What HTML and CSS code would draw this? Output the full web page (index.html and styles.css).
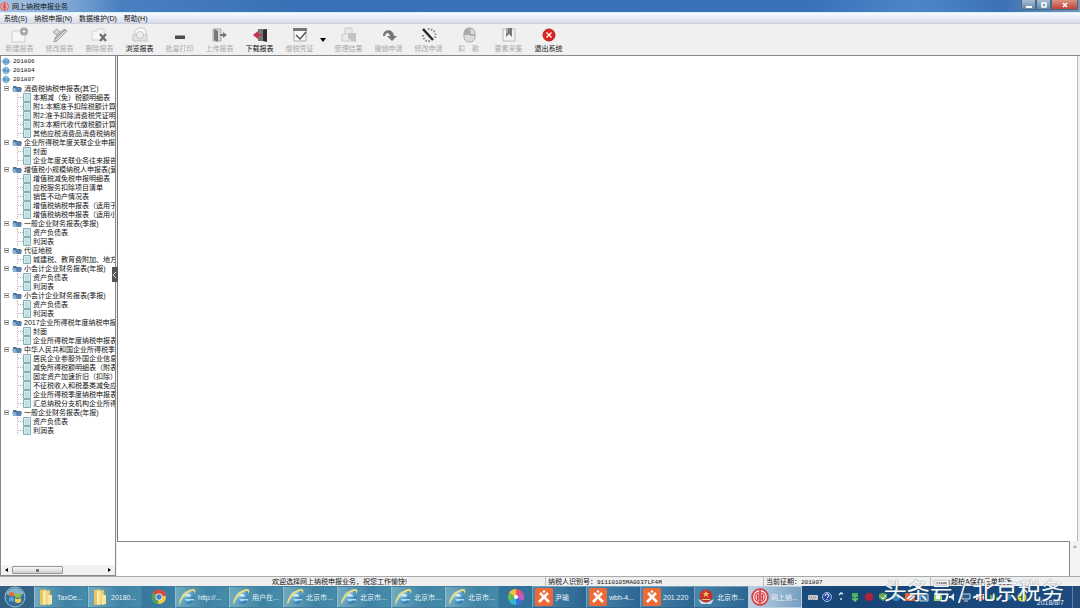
FILE: index.html
```html
<!doctype html>
<html lang="zh-CN">

<head>
    <meta charset="UTF-8">
    <title>网上纳税申报业务</title>
    <link rel="stylesheet" href="styles.css">
</head>

<body>
    <!-- Shared icons -->
    <svg class="sprite" aria-hidden="true">
        <defs>
            <linearGradient id="blue-ball" x1="0" y1="0" x2="1" y2="1">
                <stop offset="0" stop-color="#a5e4fa" />
                <stop offset="1" stop-color="#0f62a5" />
            </linearGradient>
            <linearGradient id="paper-yellow" x1="0" y1="0" x2="1" y2="0">
                <stop offset="0" stop-color="#fdf3b4" />
                <stop offset="1" stop-color="#e2bb55" />
            </linearGradient>
        </defs>
        <symbol id="globe" viewBox="0 0 10 9">
            <path d="M5 0l5 4.500-5 4.500-5-4.500z" fill="#bcdcec" />
            <circle cx="5" cy="4.500" r="3.500" fill="#86b8d8" />
            <path d="M2 3h3v3H3zM6 4l2-1v3H6z" fill="#5b94bd" />
        </symbol>
        <symbol id="folder" viewBox="0 0 10 8">
            <path d="M1 7V1h3l1 1h4v5z" fill="#4d7397" />
            <path d="M0 3h7l2 4H1z" fill="#8fb2d4" />
            <path d="M3 3h7L9 7H5z" fill="#5a83ae" />
        </symbol>
        <symbol id="sheet" viewBox="0 0 8 9">
            <path d="M.5.500h7v8h-7z" fill="#d3ecee" stroke="#86aeb6" />
            <path d="M2 3h4M2 5h4M2 7h4" stroke="#9cc9d0" stroke-width=".7" />
        </symbol>
        <symbol id="seal" viewBox="0 0 16 16">
            <circle cx="8" cy="8" r="7" fill="#fbe4e4" stroke="#d23b43" stroke-width="1.500" />
            <circle cx="8" cy="8" r="4.500" fill="none" stroke="#d23b43" />
            <path d="M8 2v12M6 5v6M10 5v6" stroke="#d23b43" stroke-width="1.500" />
        </symbol>
        <symbol id="explorer" viewBox="0 0 18 18">
            <circle cx="10" cy="9.500" r="6.500" fill="url(#blue-ball)" />
            <path d="M7 8.500a3 2.500 0 0 1 6 0z" fill="#d9eef5" />
            <path d="M7 11h9v1.500h-4q-3 2-5-1.500z" fill="#b6dceb" />
            <path d="M2 17C-1 13 6 2 15 1c3 0 3 3 1 5 1-3-1-4-4-2C7 6 3 12 2 17z" fill="#e9dc85" />
        </symbol>
        <symbol id="files" viewBox="0 0 16 18">
            <path d="M2 2l6-1v15l-6 1z" fill="#e7c465" />
            <path d="M5 3l7-1 1 14-8 1z" fill="url(#paper-yellow)" />
            <path d="M10 7h4v9l-4 1z" fill="#f7e7a3" />
        </symbol>
        <symbol id="remote" viewBox="0 0 18 18">
            <rect width="18" height="18" rx="2" fill="#ee6a35" />
            <path d="M4 14l9-9M5 5l3 3M10 10l4 4" stroke="#fff" stroke-width="2.500" />
            <circle cx="9" cy="3.500" r="1.200" fill="#fff" />
        </symbol>
    </svg>

    <header class="titlebar">
        <svg class="title-icon"><use href="#seal" /></svg>
        <h1 class="title">网上纳税申报业务</h1>
        <div class="window-controls">
            <button class="window-button" aria-label="最小化"><svg viewBox="0 0 10 8"><path d="M2 6h6" stroke="#fff" stroke-width="2" /></svg></button>
            <button class="window-button" aria-label="还原"><svg viewBox="0 0 10 8"><path d="M3 2h4v4H3z" fill="none" stroke="#fff" stroke-width="1.500" /></svg></button>
            <button class="window-button close" aria-label="关闭"><svg viewBox="0 0 10 8"><path d="M3 2l4 4M7 2L3 6" stroke="#fff" stroke-width="1.500" /></svg></button>
        </div>
    </header>

    <nav class="menubar">
        <button class="menu-item">系统(S)</button>
        <button class="menu-item">纳税申报(N)</button>
        <button class="menu-item">数据维护(D)</button>
        <button class="menu-item">帮助(H)</button>
    </nav>

    <div class="toolbar">
        <button class="tool" disabled>
            <svg viewBox="0 0 18 16"><path d="M1 4h13v11H1z" fill="#f6f6f6" stroke="#ccc" /><circle cx="13" cy="4.500" r="4" fill="#a5a5a5" /><path d="M11 4.500h4M13 2.500v4" stroke="#e8e8e8" /></svg>
            新建报表
        </button>
        <button class="tool" disabled>
            <svg viewBox="0 0 18 16"><path d="M2 5l4-3 3 3-3 3zM9 5l5-3 2 2-10 10-3 1 1-4z" fill="#d5d5d5" stroke="#a2a2a2" /><path d="M4 12L14 3" stroke="#888" /></svg>
            修改报表
        </button>
        <button class="tool" disabled>
            <svg viewBox="0 0 18 16"><path d="M1 4h5l1-2h6v11H1z" fill="#f7f7f7" stroke="#d2d2d2" /><path d="M9 7l6 7M15 7l-6 7" stroke="#6f6f6f" stroke-width="2.200" /></svg>
            删除报表
        </button>
        <button class="tool">
            <svg viewBox="0 0 18 16"><path d="M4 9V4l3-3h6l2 3v5" fill="#f8f8f8" stroke="#ccc" /><path d="M2 8h14v6H2z" fill="#e2e2e2" stroke="#c4c4c4" /><circle cx="9" cy="8" r="3.500" fill="#eee" stroke="#c3c3c3" /></svg>
            浏览报表
        </button>
        <button class="tool" disabled>
            <svg viewBox="0 0 18 16"><path d="M4 8h10v4H4z" fill="#4c4c4c" /><path d="M4 8h10v1H4z" fill="#999" /></svg>
            批量打印
        </button>
        <button class="tool" disabled>
            <svg viewBox="0 0 18 16"><path d="M2 2h8v12H2z" fill="#d8d8d8" stroke="#aaa" /><path d="M3 2l4 2v11l-4-2z" fill="#777" /><path d="M9 7h3V5l4 3-4 3V9H9z" fill="#777" /></svg>
            上传报表
        </button>
        <button class="tool">
            <svg viewBox="0 0 18 16"><path d="M7 2h9v12H7z" fill="#777" /><path d="M12 3l4-1v13l-4-1z" fill="#332b2b" /><path d="M11 7H7V4L2 8l5 4V9h4z" fill="#c83246" /></svg>
            下载报表
        </button>
        <button class="tool" disabled>
            <svg viewBox="0 0 18 16"><path d="M3 2h12v12H3z" fill="#f8f8f8" stroke="#aaa" /><path d="M2 1h14v3H2z" fill="#777" /><path d="M5 8l4 4 6-7" fill="none" stroke="#555" stroke-width="1.500" /></svg>
            缴税凭证
        </button>
        <button class="tool-arrow" aria-label="更多"><svg viewBox="0 0 6 4"><path d="M0 0h6L3 4z" /></svg></button>
        <button class="tool" disabled>
            <svg viewBox="0 0 18 16"><path d="M5 7V1h7v6M2 7h13v7H2z" fill="#e9e9e9" stroke="#ccc" /><path d="M8 6h8v9l-4-1-4-3z" fill="#c3c3c3" /></svg>
            受理结果
        </button>
        <button class="tool" disabled>
            <svg viewBox="0 0 18 16"><path d="M3 9c0-7 10-8 11 0h3l-5 5-5-5h3c-1-4-4-4-5 0z" fill="#777" /></svg>
            撤销申请
        </button>
        <button class="tool" disabled>
            <svg viewBox="0 0 18 16"><path d="M3 2l10 11" stroke="#292929" stroke-width="2.500" /><path d="M8 2c6 0 9 5 7 9M3 8c0 4 3 7 7 6" fill="none" stroke="#888" stroke-width="2" stroke-dasharray="1.500 1.500" /></svg>
            修改申请
        </button>
        <button class="tool" disabled>
            <svg viewBox="0 0 18 16"><rect x="4" y="1" width="11" height="14" rx="5" fill="#ddd" stroke="#aaa" /><path d="M9 1v7H4c0-4 1-7 5-7z" fill="#aaa" /><path d="M10 1v7h5" fill="none" stroke="#888" /></svg>
            扣&#12288;款
        </button>
        <button class="tool" disabled>
            <svg viewBox="0 0 18 16"><path d="M3 2h12v12H3z" fill="#f3f3f3" stroke="#bbb" /><path d="M6 1h6v9l-3-3-3 3z" fill="#777" /><path d="M6 1h2v5H6z" fill="#aaa" /></svg>
            要素采集
        </button>
        <button class="tool">
            <svg viewBox="0 0 18 16"><circle cx="9" cy="8" r="6" fill="#dc2424" stroke="#b61e1e" /><path d="M6.500 5.500l5 5M11.500 5.500l-5 5" stroke="#fff" stroke-width="1.200" /></svg>
            退出系统
        </button>
    </div>

    <main class="workspace">
        <aside class="sidebar">
            <div class="tree-view">
                <ul class="periods">
                    <li class="row"><svg class="globe"><use href="#globe" /></svg><span class="code">201806</span></li>
                    <li class="row"><svg class="globe"><use href="#globe" /></svg><span class="code">201804</span></li>
                    <li class="row"><svg class="globe"><use href="#globe" /></svg><span class="code">201807</span></li>
                </ul>
                <ul class="tree">
                    <li class="branch">
                        <div class="row"><span class="toggle"></span><svg class="folder"><use href="#folder" /></svg>消费税纳税申报表(其它)</div>
                        <ul class="leaves">
                            <li class="row leaf"><svg class="sheet"><use href="#sheet" /></svg>本期减（免）税额明细表</li>
                            <li class="row leaf"><svg class="sheet"><use href="#sheet" /></svg>附1:本期准予扣除税额计算</li>
                            <li class="row leaf"><svg class="sheet"><use href="#sheet" /></svg>附2:准予扣除消费税凭证明</li>
                            <li class="row leaf"><svg class="sheet"><use href="#sheet" /></svg>附3:本期代收代缴税额计算</li>
                            <li class="row leaf"><svg class="sheet"><use href="#sheet" /></svg>其他应税消费品消费税纳税</li>
                        </ul>
                    </li>
                    <li class="branch">
                        <div class="row"><span class="toggle"></span><svg class="folder"><use href="#folder" /></svg>企业所得税年度关联企业申报表</div>
                        <ul class="leaves">
                            <li class="row leaf"><svg class="sheet"><use href="#sheet" /></svg>封面</li>
                            <li class="row leaf"><svg class="sheet"><use href="#sheet" /></svg>企业年度关联业务往来报告</li>
                        </ul>
                    </li>
                    <li class="branch">
                        <div class="row"><span class="toggle"></span><svg class="folder"><use href="#folder" /></svg>增值税小规模纳税人申报表(营</div>
                        <ul class="leaves">
                            <li class="row leaf"><svg class="sheet"><use href="#sheet" /></svg>增值税减免税申报明细表</li>
                            <li class="row leaf"><svg class="sheet"><use href="#sheet" /></svg>应税服务扣除项目清单</li>
                            <li class="row leaf"><svg class="sheet"><use href="#sheet" /></svg>销售不动产情况表</li>
                            <li class="row leaf"><svg class="sheet"><use href="#sheet" /></svg>增值税纳税申报表（适用于</li>
                            <li class="row leaf"><svg class="sheet"><use href="#sheet" /></svg>增值税纳税申报表（适用小</li>
                        </ul>
                    </li>
                    <li class="branch">
                        <div class="row"><span class="toggle"></span><svg class="folder"><use href="#folder" /></svg>一般企业财务报表(季报)</div>
                        <ul class="leaves">
                            <li class="row leaf"><svg class="sheet"><use href="#sheet" /></svg>资产负债表</li>
                            <li class="row leaf"><svg class="sheet"><use href="#sheet" /></svg>利润表</li>
                        </ul>
                    </li>
                    <li class="branch">
                        <div class="row"><span class="toggle"></span><svg class="folder"><use href="#folder" /></svg>代征地税</div>
                        <ul class="leaves">
                            <li class="row leaf"><svg class="sheet"><use href="#sheet" /></svg>城建税、教育费附加、地方</li>
                        </ul>
                    </li>
                    <li class="branch">
                        <div class="row"><span class="toggle"></span><svg class="folder"><use href="#folder" /></svg>小会计企业财务报表(年报)</div>
                        <ul class="leaves">
                            <li class="row leaf"><svg class="sheet"><use href="#sheet" /></svg>资产负债表</li>
                            <li class="row leaf"><svg class="sheet"><use href="#sheet" /></svg>利润表</li>
                        </ul>
                    </li>
                    <li class="branch">
                        <div class="row"><span class="toggle"></span><svg class="folder"><use href="#folder" /></svg>小会计企业财务报表(季报)</div>
                        <ul class="leaves">
                            <li class="row leaf"><svg class="sheet"><use href="#sheet" /></svg>资产负债表</li>
                            <li class="row leaf"><svg class="sheet"><use href="#sheet" /></svg>利润表</li>
                        </ul>
                    </li>
                    <li class="branch">
                        <div class="row"><span class="toggle"></span><svg class="folder"><use href="#folder" /></svg>2017企业所得税年度纳税申报表</div>
                        <ul class="leaves">
                            <li class="row leaf"><svg class="sheet"><use href="#sheet" /></svg>封面</li>
                            <li class="row leaf"><svg class="sheet"><use href="#sheet" /></svg>企业所得税年度纳税申报表</li>
                        </ul>
                    </li>
                    <li class="branch">
                        <div class="row"><span class="toggle"></span><svg class="folder"><use href="#folder" /></svg>中华人民共和国企业所得税季度</div>
                        <ul class="leaves">
                            <li class="row leaf"><svg class="sheet"><use href="#sheet" /></svg>居民企业参股外国企业信息</li>
                            <li class="row leaf"><svg class="sheet"><use href="#sheet" /></svg>减免所得税额明细表（附表</li>
                            <li class="row leaf"><svg class="sheet"><use href="#sheet" /></svg>固定资产加速折旧（扣除）</li>
                            <li class="row leaf"><svg class="sheet"><use href="#sheet" /></svg>不征税收入和税基类减免应</li>
                            <li class="row leaf"><svg class="sheet"><use href="#sheet" /></svg>企业所得税季度纳税申报表</li>
                            <li class="row leaf"><svg class="sheet"><use href="#sheet" /></svg>汇总纳税分支机构企业所得</li>
                        </ul>
                    </li>
                    <li class="branch">
                        <div class="row"><span class="toggle"></span><svg class="folder"><use href="#folder" /></svg>一般企业财务报表(年报)</div>
                        <ul class="leaves">
                            <li class="row leaf"><svg class="sheet"><use href="#sheet" /></svg>资产负债表</li>
                            <li class="row leaf"><svg class="sheet"><use href="#sheet" /></svg>利润表</li>
                        </ul>
                    </li>
                </ul>
            </div>
            <div class="scrollbar">
                <svg class="scroll-arrow" viewBox="0 0 3 4"><path d="M3 0v4L0 2z" /></svg>
                <div class="scroll-track"><div class="scroll-thumb"></div></div>
                <svg class="scroll-arrow" viewBox="0 0 3 4"><path d="M0 0v4l3-2z" /></svg>
            </div>
            <button class="splitter" aria-label="收起"><svg viewBox="0 0 5 8"><path d="M4 1L1 4l3 3" fill="none" stroke="#ddd" /></svg></button>
        </aside>
        <section class="content">
            <div class="document"></div>
            <div class="message-pane">
                <div class="messages"></div>
                <div class="message-scroll"><svg class="scroll-up" viewBox="0 0 4 3"><path d="M0 3h4L2 0z" fill="#aaa" /></svg></div>
            </div>
        </section>
    </main>

    <footer class="statusbar">
        <p class="status welcome">欢迎选择网上纳税申报业务，祝您工作愉快!</p>
        <p class="status taxpayer">纳税人识别号：<span class="code">91110105MA0037LF4M</span></p>
        <p class="status period">当前征期：<span class="code">201807</span></p>
        <p class="status version"><span class="code">|num|</span>超柏A保存云单机版</p>
    </footer>

    <div class="taskbar">
        <button class="start" aria-label="开始">
            <svg viewBox="0 0 22 22"><circle cx="11" cy="11" r="10" fill="#356e9b" stroke="#93bed1" /><path d="M2 8a10 10 0 0 1 18 0Q11 12 2 8z" fill="#86b3c9" /><path d="M5 7q3-2 5 0v4q-3-2-5 0z" fill="#e46a3c" /><path d="M11 7q3 2 6 0v4q-3 2-6 0z" fill="#91bd43" /><path d="M5 12q3-2 5 0v4q-3-2-5 0z" fill="#4fa7dc" /><path d="M11 12q3 2 6 0v4q-3 2-6 0z" fill="#f2cb46" /></svg>
        </button>
        <button class="task"><svg><use href="#files" /></svg><span>TaxDe...</span></button>
        <button class="task"><svg><use href="#files" /></svg><span>20180...</span></button>
        <button class="task pinned" aria-label="Chrome">
            <svg viewBox="0 0 18 18"><circle cx="9" cy="9" r="7" fill="#f1c83c" /><path d="M9 9L3 5a7 7 0 0 1 13 3H9z" fill="#d94b3d" /><path d="M9 9l-1 7A7 7 0 0 1 3 5z" fill="#4da25b" /><circle cx="9" cy="9" r="3.500" fill="#fff" /><circle cx="9" cy="9" r="2.700" fill="#4380c4" /></svg>
        </button>
        <button class="task"><svg><use href="#explorer" /></svg><span>http://...</span></button>
        <button class="task"><svg><use href="#explorer" /></svg><span>用户在...</span></button>
        <button class="task"><svg><use href="#explorer" /></svg><span>北京市...</span></button>
        <button class="task"><svg><use href="#explorer" /></svg><span>北京市...</span></button>
        <button class="task"><svg><use href="#explorer" /></svg><span>北京市...</span></button>
        <button class="task"><svg><use href="#explorer" /></svg><span>北京市...</span></button>
        <button class="task pinned" aria-label="浏览器">
            <svg viewBox="0 0 18 18"><path d="M9 9V1a8 8 0 0 1 7 4z" fill="#e7506c" /><path d="M9 9l7-4a8 8 0 0 1 0 8z" fill="#c459c5" /><path d="M9 9l7 4a8 8 0 0 1-7 4z" fill="#3f72d8" /><path d="M9 9v8a8 8 0 0 1-7-4z" fill="#37b8d0" /><path d="M9 9l-7 4a8 8 0 0 1 0-8z" fill="#61bd4f" /><path d="M9 9L2 5a8 8 0 0 1 7-4z" fill="#f0c23e" /><circle cx="9" cy="9" r="2" fill="#fff" /></svg>
        </button>
        <button class="task dark"><svg><use href="#remote" /></svg><span>尹瑜</span></button>
        <button class="task dark"><svg><use href="#remote" /></svg><span>wbh-4...</span></button>
        <button class="task dark"><svg><use href="#remote" /></svg><span>201.220</span></button>
        <button class="task dark">
            <svg viewBox="0 0 18 18"><path d="M1 11q8 5 16 0l-3 5H4z" fill="#c7dbea" /><circle cx="9" cy="8" r="6.500" fill="#c7332b" /><path d="M9 3l1 2h2l-1.500 1.500L11 9 9 7.500 7 9l.5-2.500L6 5h2zM5 11h8v1H5z" fill="#f1c765" /></svg>
            <span>北京市...</span>
        </button>
        <button class="task active"><svg><use href="#seal" /></svg><span>网上纳...</span></button>
        <div class="tray">
            <svg viewBox="0 0 10 10"><rect y="3" width="10" height="5" rx="1" fill="#ccc" /><path d="M1 5h8M2 7h6" stroke="#777" stroke-dasharray="1 1" /></svg>
            <svg viewBox="0 0 10 10"><circle cx="5" cy="5" r="4.500" fill="#2447a1" stroke="#a9bfe5" /><path d="M3 4q0-2 2-2t2 2L5 6M5 7v1" fill="none" stroke="#fff" /></svg>
            <svg viewBox="0 0 10 10"><path d="M3 3l2-2 2 1M4 7h2" fill="none" stroke="#cfe6fa" stroke-width="1.500" /></svg>
            <svg viewBox="0 0 10 10"><path d="M2 2h6M2 4h6M5 4v5M2 6l3 3 3-3" fill="none" stroke="#5fd35f" stroke-width="1.500" /></svg>
            <svg viewBox="0 0 10 10"><circle cx="5" cy="5" r="4" fill="#b81f3b" /></svg>
            <svg viewBox="0 0 10 10"><path d="M1 2l4-1 4 1v4L5 9 1 6z" fill="#67a956" /><path d="M3 5l2 2 3-4" fill="none" stroke="#fff" /></svg>
            <svg viewBox="0 0 10 10"><circle cx="5" cy="5" r="4" fill="#3484bc" /><path d="M2 6l3-4 3 4" fill="none" stroke="#fff" /></svg>
            <svg viewBox="0 0 10 10"><path d="M0 1h10v8H0z" fill="#e45d35" /><path d="M2 7l6-5" stroke="#fff" stroke-width="2" /></svg>
            <svg viewBox="0 0 10 10"><path d="M1 2h8v7H1z" fill="#286fa9" stroke="#b8d6e7" /><path d="M3 3l4 3" stroke="#fff" /></svg>
            <svg viewBox="0 0 10 10"><path d="M1 1h8v8H1z" fill="#9ad67b" /><path d="M3 3h4v4H3z" fill="#fff" /></svg>
            <svg viewBox="0 0 10 10"><path d="M2 4h2l3-3v8L4 6H2z" fill="#dceaf4" /></svg>
            <svg viewBox="0 0 10 10"><path d="M1 2h8v5H1zM3 9h4" fill="#295986" stroke="#c5d9e8" /></svg>
            <svg viewBox="0 0 10 10"><path d="M1 2h8v6H1z" fill="#dbe6ee" /><path d="M3 3l5 5M8 3L3 8" stroke="#d23b33" stroke-width="2" /></svg>
            <svg viewBox="0 0 10 10"><path d="M2 8V3M5 8V1M8 8V5" stroke="#63b34c" stroke-width="2" /></svg>
            <svg viewBox="0 0 10 10"><circle cx="5" cy="5" r="3" fill="#3b82b7" /></svg>
            <svg viewBox="0 0 10 10"><circle cx="5" cy="5" r="4.500" fill="#e6df32" /><path d="M5 2v6M2 5h6" stroke="#43682f" stroke-width="1.500" /></svg>
        </div>
        <time class="clock" datetime="2018-08-07">2018/8/7</time>
        <button class="show-desktop" aria-label="显示桌面"></button>
    </div>

    <p class="watermark">头条号 / 北京税务</p>
</body>

</html>
```
FILE: styles.css
```css
@charset "UTF-8";
* {
    box-sizing: border-box;
    margin: 0;
    padding: 0;
}

body {
    display: flex;
    flex-direction: column;
    height: 100vh;
    overflow: hidden;
    background: #f0f0f0;
    color: #111;
    font: 7px/9px "Liberation Sans", "Noto Sans CJK SC", sans-serif;
}

ul {
    list-style: none;
}

button {
    border: 0;
    background: none;
    color: inherit;
    font: inherit;
}

svg {
    display: block;
    flex: none;
}

.sprite {
    position: absolute;
    width: 0;
    height: 0;
}

/* Title and menu */

.titlebar {
    display: flex;
    align-items: center;
    flex: none;
    gap: 3px;
    height: 12px;
    background: linear-gradient(90deg, #a9c3e0 0, #86add8 60px, #4a80c1 120px, #3970b5 300px, #3a72b8 75%, #4d86c8 85%, #3c72b5 93%, #7797b5 100%);
}

.title-icon {
    width: 9px;
    height: 9px;
}

.title {
    flex: 1;
    font-size: 7px;
    font-weight: normal;
}

.window-controls {
    display: flex;
    align-self: flex-start;
    margin-right: 2px;
}

.window-button {
    display: flex;
    align-items: center;
    justify-content: center;
    width: 15px;
    height: 10px;
    border: 1px solid #49698c;
    border-top: 0;
    background: linear-gradient(#a7bed3, #6587a9);
}

.window-button svg {
    width: 10px;
    height: 8px;
}

.window-button.close {
    width: 27px;
    background: linear-gradient(#dc9282, #c14432);
}

.menubar {
    display: flex;
    align-items: center;
    flex: none;
    gap: 7px;
    height: 12px;
    padding: 0 4px;
    border-top: 1px solid #d8f2fc;
    border-bottom: 1px solid #cfcfd8;
    background: linear-gradient(#f7f9fe, #d7dced);
}

/* Toolbar */

.toolbar {
    display: flex;
    flex: none;
    height: 32px;
    border-bottom: 1px solid #888;
    background: #f0f0f1;
}

.tool {
    display: flex;
    flex-direction: column;
    align-items: center;
    gap: 1px;
    width: 40px;
    padding: 3px 1px 0 0;
    white-space: nowrap;
}

.tool:disabled {
    color: #aaa;
}

.tool svg {
    width: 18px;
    height: 16px;
}

.tool-arrow {
    width: 9px;
}

.tool-arrow svg {
    width: 6px;
    height: 4px;
}

/* Report tree */

.workspace {
    display: flex;
    flex: 1;
    min-height: 0;
    gap: 1px;
}

.sidebar {
    position: relative;
    display: flex;
    flex-direction: column;
    flex: none;
    width: 116px;
    border: 1px solid #888;
    border-top: 0;
    background: #fff;
}

.tree-view {
    flex: 1;
    min-height: 0;
    padding-top: 1px;
    overflow: hidden;
}

.row {
    display: flex;
    align-items: center;
    height: 9px;
    white-space: nowrap;
}

.globe {
    width: 10px;
    height: 9px;
    margin-right: 2px;
}

.branch {
    padding-left: 3px;
}

.toggle {
    flex: none;
    width: 5px;
    height: 5px;
    margin-right: 3px;
    border: 1px solid #aaa;
    background: linear-gradient(#555, #555) center / 3px 1px no-repeat #fff;
}

.folder {
    width: 10px;
    height: 8px;
    margin-right: 2px;
}

.leaves {
    margin-left: 13px;
    border-left: 1px dotted #bbb;
}

.leaf::before {
    flex: none;
    width: 5px;
    border-top: 1px dotted #bbb;
    content: "";
}

.sheet {
    width: 8px;
    height: 9px;
    margin-right: 2px;
}

.scrollbar {
    display: flex;
    align-items: center;
    flex: none;
    gap: 4px;
    height: 10px;
    padding: 0 4px;
    background: #f2f2f2;
}

.scroll-arrow {
    width: 3px;
    height: 4px;
}

.scroll-track {
    flex: 1;
}

.scroll-thumb {
    width: 55%;
    height: 8px;
    border: 1px solid #999;
    border-radius: 1px;
    background: linear-gradient(#777, #777) center / 3px 3px no-repeat, linear-gradient(#f8f8f8, #d0d0d0);
}

.splitter {
    position: absolute;
    top: 211px;
    right: -3px;
    display: flex;
    align-items: center;
    width: 6px;
    height: 15px;
    background: #555;
}

.splitter svg {
    width: 5px;
    height: 8px;
}

/* Work area */

.content {
    display: flex;
    flex-direction: column;
    flex: 1;
    min-width: 0;
}

.document {
    flex: 1;
    margin-right: 2px;
    border-left: 1px solid #777;
    border-right: 1px solid #bbb;
    background: #fff;
}

.message-pane {
    display: flex;
    height: 35px;
}

.messages {
    flex: 1;
    border: 1px solid #888;
    border-bottom: 0;
    border-left: 0;
    background: #fff;
}

.message-scroll {
    width: 10px;
    padding: 4px 3px;
    background: #f3f3f3;
}

.scroll-up {
    width: 4px;
    height: 3px;
}

.statusbar {
    display: grid;
    grid-template-columns: 545fr 218fr 167fr 150fr;
    flex: none;
    height: 10px;
    border-top: 1px solid #aaa;
    background: #f0eff0;
}

.status {
    padding-left: 2px;
    border-left: 1px solid #bbb;
    overflow: hidden;
    white-space: nowrap;
}

.status.welcome {
    padding-right: 138px;
    border: 0;
    text-align: right;
}

.code {
    font: 6px/9px "Liberation Mono", monospace;
}

/* Taskbar */

.taskbar {
    display: flex;
    flex: none;
    height: 22px;
    background: linear-gradient(90deg, #315f83 0, #3e85aa 20%, #34779e 45%, #235b8d 65%, #174576 78%, #1c4a80 100%);
    color: #e8f3fa;
}

.start {
    width: 34px;
    padding-left: 4px;
}

.start svg {
    width: 22px;
    height: 22px;
}

.task {
    display: flex;
    align-items: center;
    flex: 0 1 54px;
    gap: 2px;
    min-width: 0;
    padding-left: 2px;
    border: 1px solid #447e9f;
    border-left-color: #8fbdd0;
    background: linear-gradient(90deg, #70aabd, #3f83a4 60%, #458caa);
    white-space: nowrap;
}

.task svg {
    width: 18px;
    height: 18px;
}

.task.pinned {
    flex-basis: 33px;
    justify-content: center;
    padding: 0;
    border-color: transparent;
    background: none;
}

.task.dark {
    border-color: #72a1bd #2e648f #2e648f #72a1bd;
    background: linear-gradient(90deg, #4a85aa, #2c6793);
}

.task.active {
    border-color: #b7cee0;
    background: linear-gradient(90deg, #bdd1e2, #759fc1);
}

.tray {
    display: flex;
    align-items: center;
    justify-content: space-between;
    flex: 1;
    padding: 0 10px 0 6px;
}

.tray svg {
    width: 10px;
    height: 10px;
}

.clock {
    align-self: flex-end;
    margin-right: 8px;
    padding-bottom: 1px;
}

.show-desktop {
    width: 8px;
    border-left: 1px solid #5b7fa5;
    background: #254b78;
}

.watermark {
    position: absolute;
    right: 16px;
    bottom: 6px;
    color: #f6f8fa;
    font: 23px/26px "Noto Sans CJK SC", sans-serif;
    text-shadow: 0 0 1px #34546d;
    white-space: nowrap;
}
```
